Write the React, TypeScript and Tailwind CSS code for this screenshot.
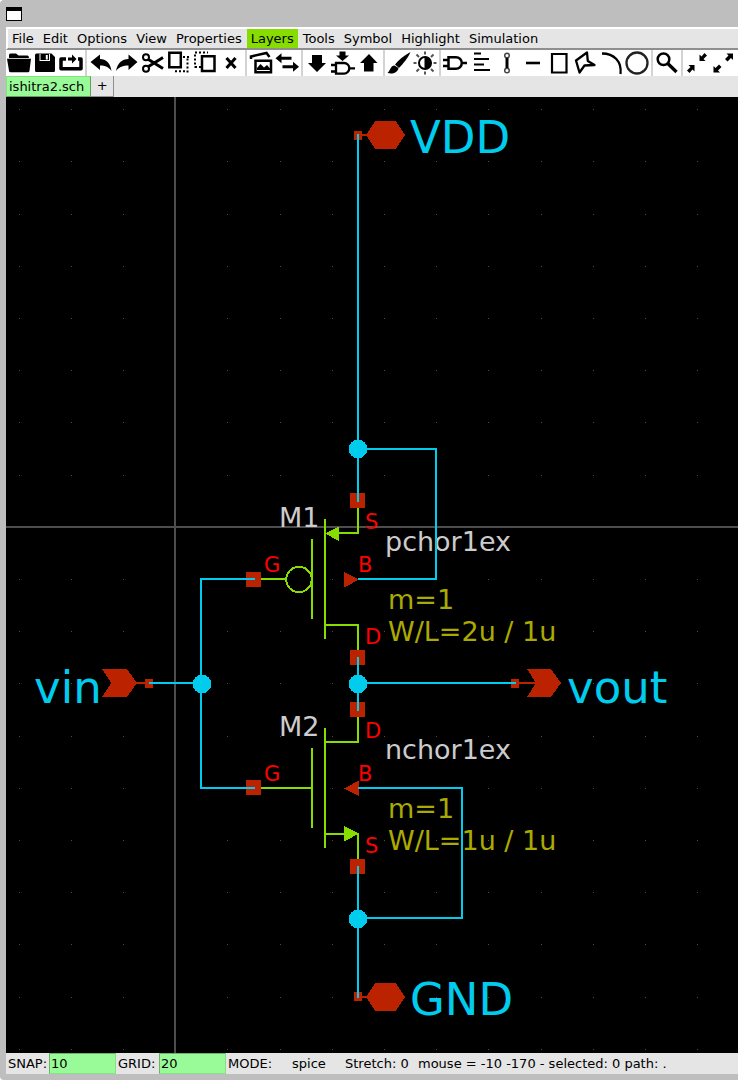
import type { ReactNode } from 'react';

const MENUS = ['File', 'Edit', 'Options', 'View', 'Properties', 'Layers', 'Tools', 'Symbol', 'Highlight', 'Simulation'];

type Tool = { label: string; icon: ReactNode };

const TOOL_GROUPS: Tool[][] = [
  [
    {
      label: 'Open',
      icon: (
        <>
          <path d="M3 8V5q0-1.500 1.500-1.500H10l2.500 2h9Q23 5.500 23 8z" />
          <path d="M1 8.800h24l-1.500 12q-.2 1.500-1.500 1.500H4.500q-1.300 0-1.500-1.500z" />
        </>
      ),
    },
    {
      label: 'Save',
      icon: (
        <path
          fillRule="evenodd"
          d="M4.500 3.500H19.500l3.500 3.500v13.500q0 1.500-1.500 1.500h-17Q3 22 3 20.500V5q0-1.500 1.500-1.500zM7.500 4v7h10.500v-7h-1v6h-8.500v-6zM13.800 5h2v4.500h-2z"
        />
      ),
    },
    {
      label: 'Reload',
      icon: (
        <>
          <path d="M8 9H3v9.800h20V9h-3" fill="none" stroke="currentColor" strokeWidth="3.500" strokeLinejoin="round" />
          <path d="M10 7.500h4V4.500l4.500 4.500-4.500 4.500v-3h-4z" />
        </>
      ),
    },
  ],
  [
    { label: 'Undo', icon: <path d="M2.500 12l9.500-7.500v4.500c6 0 10.500 4 11.500 12-3-4-6-5.500-11.500-5.500v4.500z" /> },
    { label: 'Redo', icon: <path d="M23.500 12l-9-7.500v4.500C8 9 3.500 13 2 21c3-4 7-5.500 12.500-5.500v4.500z" /> },
    {
      label: 'Cut',
      icon: (
        <g fill="none" stroke="currentColor" strokeWidth="2">
          <circle cx="6" cy="7.300" r="3" />
          <circle cx="6" cy="18.700" r="3" />
          <path d="M8.500 9.500L23 18.500M8.500 16.500L23 7.500" strokeWidth="3" />
        </g>
      ),
    },
    {
      label: 'Copy',
      icon: (
        <g fill="none" stroke="currentColor" strokeWidth="2.500">
          <path d="M3.300 2.800h11.500v14.500H3.300z" />
          <path d="M17 7h6M21.500 8.500v14M9 21.200h12" strokeDasharray="2 2" strokeWidth="2" />
        </g>
      ),
    },
    {
      label: 'Paste',
      icon: (
        <g fill="none" stroke="currentColor" strokeWidth="2.500">
          <path d="M10 6.200h12.500v14.800H10z" />
          <path d="M3 2.500h13M3 4.500v13M3 17h6" strokeDasharray="2 2" strokeWidth="2" />
        </g>
      ),
    },
    {
      label: 'Delete',
      icon: <path d="M8.500 8l9 10M17.500 8l-9 10" fill="none" stroke="currentColor" strokeWidth="3" />,
    },
  ],
  [
    {
      label: 'Image',
      icon: (
        <>
          <path d="M3 9V6.500l15.500-3.500 3 4M7.500 10.800h15.500v11.500H7.500z" fill="none" stroke="currentColor" strokeWidth="2.500" />
          <path d="M9 20v-2l3.500-4 3.500 3.500 3-2.500 3 3.500v1.500z" />
        </>
      ),
    },
    {
      label: 'Swap',
      icon: <path d="M1.500 8.300l6-5v3.500h10v3h-10v3.500zM25 16.800l-6-5v3.500H8.500v3H19v3.500z" />,
    },
  ],
  [
    { label: 'Descend', icon: <path d="M8 5h10v8h4l-9 9-9-9h4z" /> },
    {
      label: 'Descend symbol',
      icon: (
        <>
          <path d="M9.500 1.500h6v4h3.500l-6.500 5.500L6 5.500h3.500z" />
          <path
            d="M1 15h5M1 21.500h5M19 18.300h6M6 13h8a5.300 5.300 0 0 1 0 10.600H6z"
            fill="none"
            stroke="currentColor"
            strokeWidth="2.300"
          />
        </>
      ),
    },
    { label: 'Go back', icon: <path d="M8 21.500h9.500v-8.500h4L13 4l-9 9h4z" /> },
  ],
  [
    {
      label: 'Brush',
      icon: (
        <>
          <path d="M24.500 2c-7 4-12 8-15.500 12.500l4 3.500c4.500-5 8.500-9 11.500-16z" />
          <path d="M8.500 15.500c-4 0-4 5-7 7.500 5 1.500 10.500-.5 11-5z" />
        </>
      ),
    },
    {
      label: 'Brightness',
      icon: (
        <g fill="none" stroke="currentColor">
          <circle cx="13" cy="13" r="6" strokeWidth="2" />
          <path d="M13 7a6 6 0 0 1 0 12z" fill="currentColor" />
          <path
            d="M13 1.500v3M13 21.500v3M1.500 13h3M21.500 13h3M4.500 4.500l2.500 2.500M19 19l2.500 2.500M4.500 21.500l2.500-2.500M19 7l2.500-2.500"
            strokeWidth="2"
            stroke="#555555"
          />
        </g>
      ),
    },
  ],
  [
    {
      label: 'Insert symbol',
      icon: (
        <path
          d="M1 10h5M1 16h5M20 13h5M6.500 7.200h7.500a5.800 5.800 0 0 1 0 11.600H6.500z"
          fill="none"
          stroke="currentColor"
          strokeWidth="2.500"
        />
      ),
    },
    {
      label: 'Insert text',
      icon: <path d="M6 3.500h7M6 9h15M6 14.500h10M6 20h16" fill="none" stroke="currentColor" strokeWidth="2.200" />,
    },
    {
      label: 'Insert wire',
      icon: (
        <g fill="none" stroke="currentColor">
          <circle cx="13" cy="5.500" r="2.300" strokeWidth="1.500" stroke="#444444" />
          <circle cx="13" cy="20.500" r="2.300" strokeWidth="1.500" stroke="#444444" />
          <path d="M13 8v10" strokeWidth="3" />
        </g>
      ),
    },
    { label: 'Insert line', icon: <path d="M6 11.700h14v2.600H6z" /> },
    {
      label: 'Insert rectangle',
      icon: <path d="M6 4h14.500v18.500H6z" fill="none" stroke="currentColor" strokeWidth="2.200" />,
    },
    {
      label: 'Insert polygon',
      icon: (
        <path
          d="M15 2.500l.8 8.500 6.700 4-10 .5-5 7-3.500-12z"
          fill="none"
          stroke="currentColor"
          strokeWidth="2.300"
          strokeLinejoin="round"
        />
      ),
    },
    {
      label: 'Insert arc',
      icon: <path d="M4 3.500c12 0 20 8 18.500 20.500" fill="none" stroke="currentColor" strokeWidth="2.300" />,
    },
    {
      label: 'Insert circle',
      icon: <circle cx="13" cy="13" r="10.500" fill="none" stroke="#222222" strokeWidth="2.300" />,
    },
  ],
  [
    {
      label: 'Zoom',
      icon: (
        <g fill="none" stroke="currentColor">
          <circle cx="9.500" cy="9.300" r="5.800" strokeWidth="2.500" />
          <path d="M13.500 13.300l9 8.700" strokeWidth="3.300" />
        </g>
      ),
    },
  ],
  [
    {
      label: 'Zoom out',
      icon: (
        <path d="M15.500 11V4.500l2 2L20.500 3 23 5.500 19.500 9l2 2zM10.500 15v6.500l-2-2L5.500 23 3 20.500 6.500 17l-2-2z" />
      ),
    },
    {
      label: 'Zoom full',
      icon: (
        <path d="M23 3.500V10l-2-2-3.500 3.500L15 9l3.500-3.500-2-2zM3.500 22.500V16l2 2L9 14.500l2.500 2.500L8 20.500l2 2z" />
      ),
    },
  ],
];

const DOT_COLUMNS = Array.from({ length: 14 }, (_, i) => Math.floor(19.1 + 52.2 * i));
const DOT_ROWS = Array.from({ length: 19 }, (_, i) => Math.floor(109.6 + 52.2 * i));

const LABELS = [
  { x: 410, y: 153, text: 'VDD', style: 'fill-[#00ccee] text-[45px]' },
  { x: 410, y: 1015, text: 'GND', style: 'fill-[#00ccee] text-[45px]' },
  { x: 34, y: 703, text: 'vin', style: 'fill-[#00ccee] text-[45px]' },
  { x: 567, y: 703, text: 'vout', style: 'fill-[#00ccee] text-[45px]' },
  { x: 279, y: 527, text: 'M1', style: 'fill-[#cccccc] text-[27px]' },
  { x: 279, y: 736, text: 'M2', style: 'fill-[#cccccc] text-[27px]' },
  { x: 385, y: 551, text: 'pchor1ex', style: 'fill-[#cccccc] text-[27px]' },
  { x: 385, y: 759, text: 'nchor1ex', style: 'fill-[#cccccc] text-[27px]' },
  { x: 388, y: 609, text: 'm=1', style: 'fill-[#aaaa00] text-[27px]' },
  { x: 388, y: 641, text: 'W/L=2u / 1u', style: 'fill-[#aaaa00] text-[27px]' },
  { x: 388, y: 818, text: 'm=1', style: 'fill-[#aaaa00] text-[27px]' },
  { x: 388, y: 850, text: 'W/L=1u / 1u', style: 'fill-[#aaaa00] text-[27px]' },
  { x: 365, y: 529, text: 'S', style: 'fill-[#ff0000] text-[21px]' },
  { x: 358, y: 572, text: 'B', style: 'fill-[#ff0000] text-[21px]' },
  { x: 264, y: 572, text: 'G', style: 'fill-[#ff0000] text-[21px]' },
  { x: 365, y: 644, text: 'D', style: 'fill-[#ff0000] text-[21px]' },
  { x: 365, y: 738, text: 'D', style: 'fill-[#ff0000] text-[21px]' },
  { x: 358, y: 781, text: 'B', style: 'fill-[#ff0000] text-[21px]' },
  { x: 264, y: 781, text: 'G', style: 'fill-[#ff0000] text-[21px]' },
  { x: 365, y: 853, text: 'S', style: 'fill-[#ff0000] text-[21px]' },
];

const PINS = [
  [350, 493],
  [350, 650],
  [350, 702],
  [350, 859],
  [246, 572],
  [246, 780],
];

const PORT_PINS = [
  [354, 131],
  [354, 992],
  [145, 679],
  [511, 679],
];

const JUNCTIONS = [
  [358, 449],
  [358, 684],
  [202, 684],
  [358, 919],
];

function Schematic() {
  return (
    <svg viewBox="6 97 732 956" className="block w-full" role="img" aria-label="Inverter schematic">
      <g shapeRendering="crispEdges" fill="#4d4d4d">
        {DOT_ROWS.map((y) => DOT_COLUMNS.map((x) => <rect key={`${x}-${y}`} x={x} y={y} width="1" height="1" />))}
        <rect x="174" y="97" width="2" height="956" />
        <rect x="6" y="526" width="732" height="2" />
      </g>
      <g className="font-['DejaVu_Sans',sans-serif] whitespace-pre">
        {LABELS.map((l) => (
          <text key={`${l.x}-${l.y}`} x={l.x} y={l.y} className={l.style}>
            {l.text}
          </text>
        ))}
      </g>
      <g shapeRendering="crispEdges">
        <g fill="none" stroke="#88dd00" strokeWidth="2">
          <path d="M358 508V533H338M325 519V639M312 539V619M261 579H286M325 625H358V650" />
          <circle cx="299" cy="579.500" r="12.700" />
          <path d="M358 717V742H325M325 728V848M312 748V828M261 788H312M325 834H345M358 833V859" />
        </g>
        <path d="M325 533.500L339 526.500V541ZM359 833.500L344 826V841.500Z" fill="#88dd00" />
        <g fill="#bb2200">
          {PINS.map(([x, y]) => (
            <rect key={`${x}-${y}`} x={x} y={y} width="15" height="15" />
          ))}
          {PORT_PINS.map(([x, y]) => (
            <rect key={`${x}-${y}`} x={x} y={y} width="8" height="9" />
          ))}
          <path d="M344 572V587.500L359 579.500ZM359 780.500V796L344 788.500Z" />
          <path d="M366 135L375.500 121H395.500L405 135L395.500 149H375.500Z" />
          <path d="M366 997L375.500 983H395.500L405 997L395.500 1011H375.500Z" />
          <path d="M102 669H127L137 683L127 697H102L111.500 683Z" />
          <path d="M527 669H551L561 683L551 697H527L536 683Z" />
          <path d="M362 134h6v2h-6zM362 996h6v2h-6zM136 682h10v2h-10zM518 682h18v2h-18z" />
        </g>
        <g fill="none" stroke="#00ccee" strokeWidth="2">
          <path d="M358 134V502M358 449H436V579H358M358 657V711M358 683H516M149 683H201" />
          <path d="M255 579H201V788H255M358 788H462V918H358M358 866V998" />
        </g>
        <g fill="#00ccee">
          {JUNCTIONS.map(([x, y]) => (
            <circle key={`${x}-${y}`} cx={x} cy={y} r="9.200" />
          ))}
        </g>
      </g>
    </svg>
  );
}

function StatusField({ id, label, value }: { id: string; label: string; value: string }) {
  return (
    <div className="flex items-stretch">
      <label htmlFor={id} className="w-[41px] whitespace-nowrap">
        {label}
      </label>
      <input
        id={id}
        defaultValue={value}
        className="w-[67px] border border-t-[#6bb36b] border-r-[#84e184] border-b-[#84e184] border-l-[#6bb36b] bg-[#98fb98] px-px outline-none"
      />
    </div>
  );
}

export default function App() {
  return (
    <div className="flex min-h-screen flex-col overflow-hidden rounded-l-sm bg-[#bebebe] pb-1.5 pl-1.5 font-['DejaVu_Sans',sans-serif] text-[13px] text-black">
      <header className="h-[27px] pt-[7px]">
        <button aria-label="Window menu" className="block h-3.5 w-4 border border-t-4 border-black bg-white" />
      </header>

      <nav className="flex gap-px overflow-hidden border-t-2 border-b-2 border-l-2 border-t-white border-b-[#8f8f8f] border-l-white bg-[#e5e5e5] leading-[19px]">
        {MENUS.map((name) => (
          <button key={name} className={name === 'Layers' ? 'bg-[#88dd00] px-1' : 'px-1'}>
            {name}
          </button>
        ))}
      </nav>

      <div role="toolbar" className="flex overflow-hidden bg-white">
        {TOOL_GROUPS.map((group, i) => (
          <div key={i} className="flex shrink-0">
            {i > 0 && <span className="mx-px w-0.5 bg-[#d3d3d3]" />}
            {group.map((tool) => (
              <button key={tool.label} aria-label={tool.label} title={tool.label}>
                <svg viewBox="0 0 26 26" className="block size-[26px]" fill="currentColor">
                  {tool.icon}
                </svg>
              </button>
            ))}
          </div>
        ))}
      </div>

      <div className="flex h-[21px] bg-[#e5e5e5] leading-[18px]">
        <button className="border border-t-[#84e184] border-r-[#5fa05f] border-b-[#5fa05f] border-l-[#84e184] bg-[#98fb98] pr-1.5 pl-0.5">
          ishitra2.sch
        </button>
        <button aria-label="New tab" className="w-[23px] border-r border-b border-[#8f8f8f]">
          +
        </button>
      </div>

      <main className="flex-1 bg-black">
        <Schematic />
      </main>

      <footer className="flex h-[21px] gap-0.5 overflow-hidden bg-[#e5e5e5] pl-0.5 leading-[21px] whitespace-pre">
        <StatusField id="snap" label="SNAP:" value="10" />
        <StatusField id="grid" label="GRID:" value="20" />
        <span className="w-[62px]">MODE:</span>
        <span className="w-[51px]">spice</span>
        <span className="w-[71px]">Stretch: 0</span>
        <span>mouse = -10 -170 - selected: 0 path: .</span>
      </footer>
    </div>
  );
}
